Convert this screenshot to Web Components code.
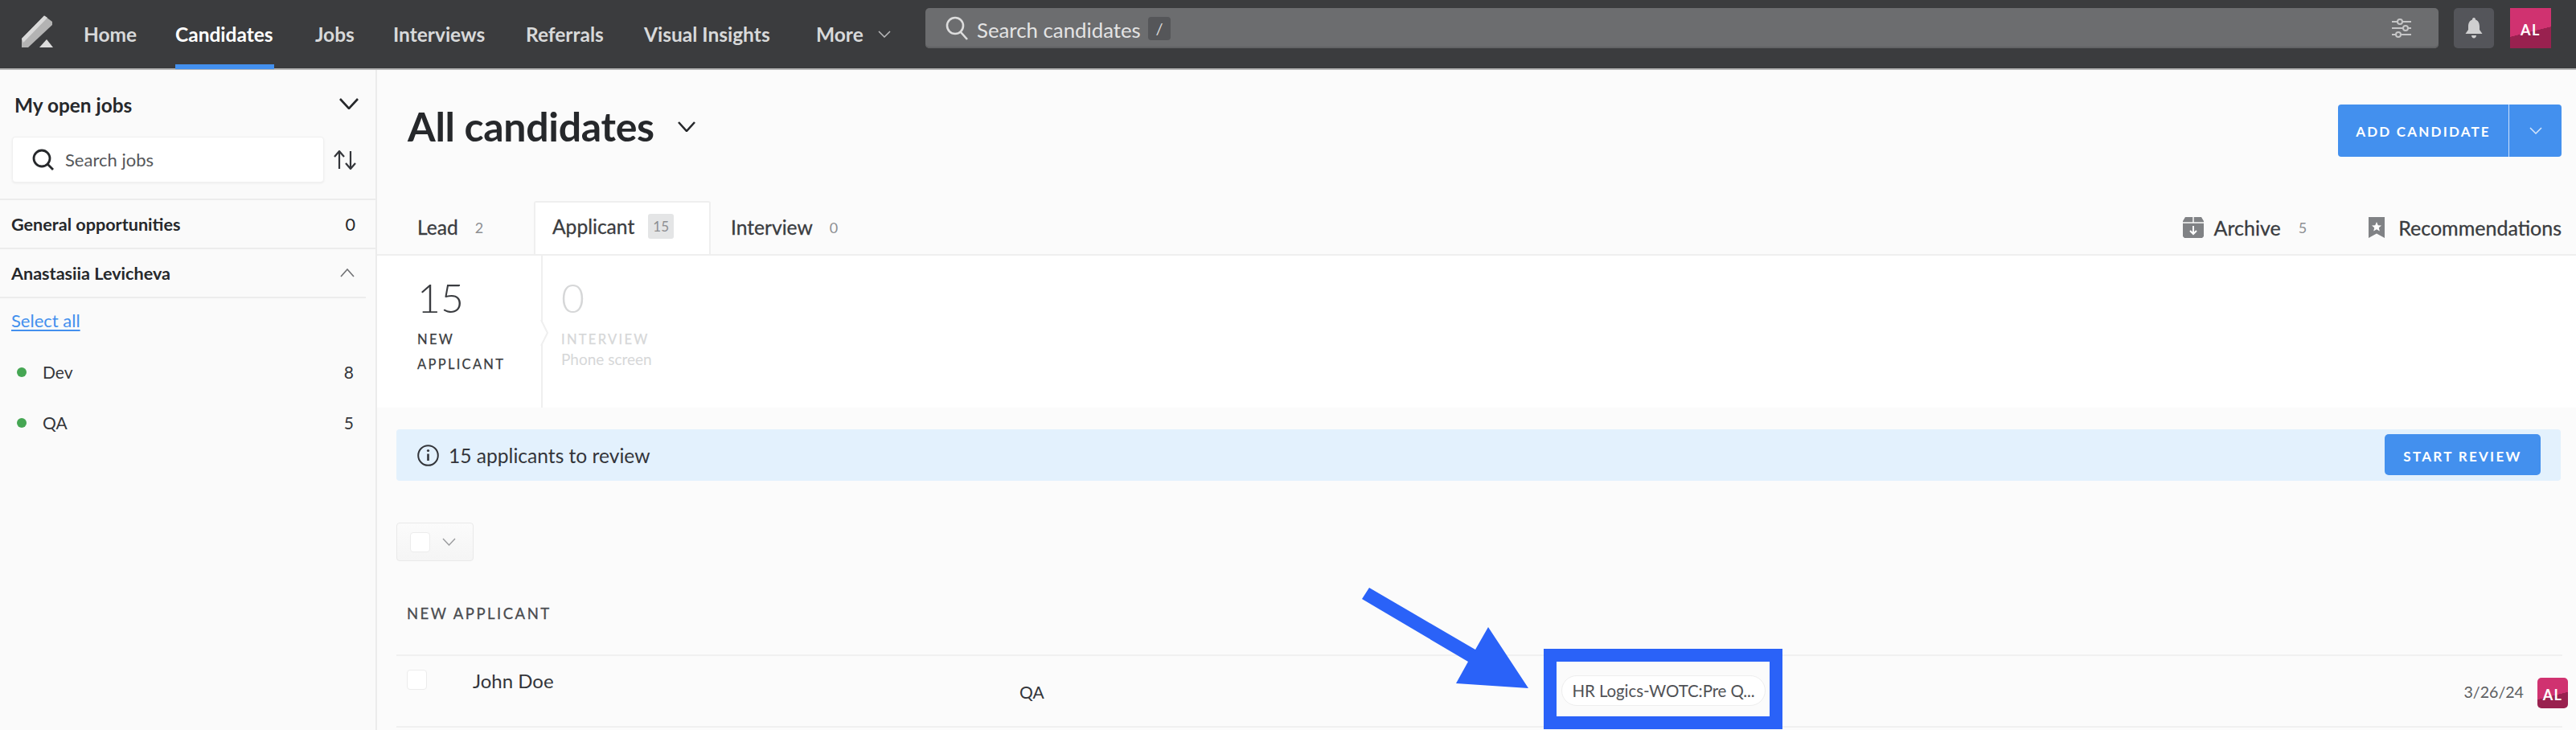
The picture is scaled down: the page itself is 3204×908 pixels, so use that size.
<!DOCTYPE html>
<html><head><meta charset="utf-8">
<style>
html,body{margin:0;height:908px;overflow:hidden;background:#fafafa;font-family:Lato,"Liberation Sans",sans-serif;color:#26282b}
</style></head><body>
<app-shell></app-shell>
<script>
const chev=(w,h,c,sw=2,up=false)=>`<svg width="${w}" height="${h}" viewBox="0 0 ${w} ${h}" fill="none" stroke="${c}" stroke-width="${sw}" style="display:block"><path d="${up?`M1 ${h-1}L${w/2} 1L${w-1} ${h-1}`:`M1 1L${w/2} ${h-1}L${w-1} 1`}"/></svg>`;
const avatar=`linear-gradient(166deg,#d03270 0 57%,#99214f 57.5% 100%)`;
function def(name,html){customElements.define(name,class extends HTMLElement{constructor(){super();this.attachShadow({mode:'open'}).innerHTML=html;}});}

def('nav-item',`<style>:host{display:flex;align-items:center;height:86px;box-sizing:border-box;font-size:24.5px;font-weight:700;color:#d8d9da;letter-spacing:0;border-bottom:6px solid transparent;padding-top:6px;white-space:nowrap}
:host([active]){color:#fff;border-bottom-color:#4390ee}</style><slot></slot>`);

def('top-nav',`<style>:host{display:flex;align-items:center;height:85px;background:#3b3c3e;border-bottom:2px solid #b5b5b5;position:relative}
.logo{margin:0 0 0 26px;width:78px;height:86px;flex:none}
nav{display:flex;gap:51px;width:1047px;flex:none}
.search{width:1882px;height:50px;flex:none;margin:-15px 0 0 0;background:#6c6d6f;border-radius:5px;box-shadow:inset 0 -2px 0 #626365;display:flex;align-items:center;box-sizing:border-box;padding:0 33px 0 25px;color:#e4e4e4;font-size:25.8px}
.search span{margin-left:11px;width:201px;white-space:nowrap;padding-top:3px}
.search kbd{font:inherit;font-size:20px;margin-left:12px;width:28px;height:29px;background:#555659;border-radius:4px;display:flex;align-items:center;justify-content:center;color:#ddd}
.search svg:last-child{margin-left:auto}
.bell{width:50px;height:50px;margin:-15px 0 0 19px;background:#54555a;border-radius:5px;display:flex;align-items:center;justify-content:center;flex:none}
.me{width:51px;height:50px;margin:-15px 0 0 20px;background:${avatar};color:#fff;font-size:18px;font-weight:700;letter-spacing:1.5px;display:flex;align-items:center;justify-content:center;flex:none;padding-top:4px;box-sizing:border-box}
</style>
<div class="logo"><svg width="44" height="44" viewBox="0 0 44 44" style="display:block;margin-top:18px"><path d="M1 30L29 1.5L39 9L39 13L9 41H1Z" fill="#b3b3b3"/><path d="M1 30L29 1.5L33 4L3 35Z" fill="#d9d9d9"/><path d="M23 41L32 31L40 41Z" fill="#dcdcdc"/></svg></div>
<nav><nav-item style="width:63px">Home</nav-item><nav-item active style="width:123px">Candidates</nav-item><nav-item style="width:46px">Jobs</nav-item><nav-item style="width:114px">Interviews</nav-item><nav-item style="width:96px">Referrals</nav-item><nav-item style="width:163px">Visual Insights</nav-item><nav-item>More<span style="display:inline-block;width:18px;margin-left:18px">${chev(16,9,'#b9babb',1.5)}</span></nav-item></nav>
<div class="search"><svg width="28" height="30" viewBox="0 0 28 30" fill="none" stroke="#ddd" stroke-width="2.6"><circle cx="12" cy="12" r="10"/><path d="M19 20L27 29"/></svg><span>Search candidates</span><kbd>/</kbd>
<svg width="26" height="26" viewBox="0 0 26 26" fill="none" stroke="#c6c6c7" stroke-width="2"><path d="M1 5H8M14 5H25M1 13H15M21 13H25M1 21H6M12 21H25"/><circle cx="11" cy="5" r="3"/><circle cx="18" cy="13" r="3"/><circle cx="9" cy="21" r="3"/></svg></div>
<div class="bell"><svg width="22" height="26" viewBox="0 0 22 26" fill="#cfcfd0"><path d="M11 0C12.5 0 13 1 13 2.5C16.5 3.5 18 7 18 11V15L21.5 20H.5L4 15V11C4 7 5.5 3.5 9 2.5C9 1 9.500 0 11 0Z"/><path d="M8 22H14C14 24 12.500 25.500 11 25.500S8 24 8 22Z"/></svg></div>
<div class="me">AL</div>`);

def('side-row',`<style>:host{display:flex;align-items:center;justify-content:space-between;box-sizing:border-box;padding:0 26px 0 14px;font-size:21.6px;font-weight:700;color:#26282b;border-bottom:2px solid #ececec;white-space:nowrap}
::slotted(*){flex:none}</style><slot></slot>`);

def('job-row',`<style>:host{display:flex;align-items:center;height:63px;padding:0 27px 0 21px;font-size:21px;color:#34363a}
i{width:12px;height:12px;border-radius:50%;background:#45a653;margin-right:20px}b{font-weight:400;margin-left:auto}</style><i></i><slot></slot><b><slot name="n"></slot></b>`);

def('side-bar',`<style>:host{display:block;width:469px;flex:none;box-sizing:border-box;border-right:2px solid #ececec;height:821px;background:#fafafa}
.h{display:flex;align-items:center;justify-content:space-between;height:83px;padding:0 21px 0 18px;font-size:24.4px;font-weight:700}
.h span{padding-top:3px}
.s{display:flex;align-items:center;height:57px;padding-left:15px;margin-bottom:20px}
.box{width:388px;height:57px;box-sizing:border-box;background:#fff;border:1px solid #f0f0f0;border-radius:4px;box-shadow:0 1px 3px #0000000f;display:flex;align-items:center;padding-left:24px;font-size:22px;color:#55575a;gap:14px}
.s svg.sort{margin-left:12px}
.top{border-bottom:2px solid #ececec;height:160px}
.anas{height:61px}
a{display:block;margin:14px 0 0 14px;height:46px;color:#4390ee;font-size:22px;text-decoration:underline;text-underline-offset:3px}
</style>
<div class="top"><div class="h"><span>My open jobs</span>${chev(24,14,'#26282b',2.6)}</div>
<div class="s"><div class="box"><svg width="27" height="27" viewBox="0 0 27 27" fill="none" stroke="#26282b" stroke-width="2.8"><circle cx="12" cy="12" r="10"/><path d="M19 19L26 26"/></svg><span>Search jobs</span></div>
<svg class="sort" width="28" height="24" viewBox="0 0 28 24" fill="none" stroke="#33353a" stroke-width="2.2"><path d="M7 23V2M1 8L7 1L13 8M21 1V22M15 16L21 23L27 16"/></svg></div></div>
<side-row style="height:61px"><span>General opportunities</span><span style="margin-right:-1px;font-weight:400">0</span></side-row>
<div class="anas"><side-row style="height:61px;margin-right:12px;padding-right:14px"><span>Anastasiia Levicheva</span>${chev(18,11,'#707174',1.6,true)}</side-row></div>
<a>Select all</a>
<job-row>Dev<span slot="n">8</span></job-row><job-row>QA<span slot="n">5</span></job-row>`);

def('tab-item',`<style>:host{display:flex;align-items:center;height:68px;box-sizing:border-box;padding-bottom:3px;font-size:24.6px;color:#3a3c40;font-weight:400;-webkit-text-stroke:.3px #3a3c40;white-space:nowrap}
:host([sel]){background:#fff;border:2px solid #efefef;border-bottom:none;border-radius:3px 3px 0 0;position:relative;top:2px;margin-top:-2px;padding:0 0 7px 21px}
b{font-weight:400;-webkit-text-stroke:0;font-size:18px;color:#8d8f92;margin-left:21px}
:host([sel]) b{margin-left:17px;background:#e4e5e6;border-radius:3px;width:32px;height:31px;display:flex;align-items:center;justify-content:center;font-size:17px}
</style><slot></slot><b><slot name="n"></slot></b>`);

def('main-head',`<style>:host{display:flex;justify-content:space-between;height:163px;box-sizing:border-box;padding:43px 18px 0 38px}
h1{margin:0;font-size:50px;font-weight:700;line-height:54px;letter-spacing:-.3px;color:#26282b;display:flex;align-items:center;height:54px;gap:29px}
.btn{display:flex;width:278px;height:65px;background:#4390ee;border-radius:4px;color:#fff;font-size:17px;font-weight:700;letter-spacing:2.2px;align-items:stretch}
.btn span{width:213px;text-align:center;border-right:1px solid #cfe2fa;line-height:68px;box-sizing:border-box;white-space:nowrap}
.btn i{margin:28px 0 0 25px}</style>
<h1>All candidates ${chev(22,13,'#26282b',2.6)}</h1>
<div class="btn"><span>ADD CANDIDATE</span><i>${chev(16,9,'#d6e6fb',1.5)}</i></div>`);

def('tab-bar',`<style>:host{display:flex;height:68px;padding:0 18px 0 50px;border-bottom:0;position:relative}
.r{display:flex;margin-left:auto;align-items:center;padding-bottom:3px;font-size:25px;color:#3a3c40;-webkit-text-stroke:.3px #3a3c40;white-space:nowrap}
.r b{font-weight:400;font-size:18px;color:#8d8f92;-webkit-text-stroke:0;margin:0 77px 0 22px}
.r svg{margin-right:13px}</style>
<tab-item style="width:145px">Lead<span slot="n">2</span></tab-item>
<tab-item sel style="width:220px">Applicant<span slot="n">15</span></tab-item>
<tab-item style="margin-left:25px">Interview<span slot="n">0</span></tab-item>
<div class="r"><svg width="26" height="26" viewBox="0 0 26 26"><path d="M3 0H23L26 5V24L24 26H2L0 24V5Z" fill="#808285"/><path d="M0 7H26" stroke="#fafafa" stroke-width="1.5"/><path d="M13 11V21M9 17L13 21L17 17" stroke="#fff" stroke-width="2" fill="none"/><path d="M13 0V7" stroke="#fafafa" stroke-width="1.500"/></svg>Archive<b>5</b>
<svg width="20" height="26" viewBox="0 0 20 26" style="margin-right:17px"><path d="M0 0H20V26L10 20.500L0 26Z" fill="#808285"/><path d="M10 6L11.800 10.200L16 10.500L12.800 13.300L13.800 17.500L10 15.300L6.200 17.500L7.200 13.300L4 10.500L8.200 10.200Z" fill="#fff"/></svg>Recommendations</div>`);

def('stage-cell',`<style>:host{display:block;box-sizing:border-box;height:189px;background:#fff}
.n{font-size:50px;font-weight:300;line-height:50px;padding-top:27px;height:50px}
.l{font-size:16.5px;font-weight:400;letter-spacing:2.3px;line-height:31px;margin-top:12px;-webkit-text-stroke:.25px currentColor}
.s{font-size:19px;line-height:24px;margin-top:-3px}
</style><div class="n"><slot name="n"></slot></div><div class="l"><slot name="l"></slot></div><div class="s"><slot name="s"></slot></div>`);

def('stage-row',`<style>:host{display:flex;height:191px;box-sizing:border-box;background:#fff;border-bottom:2px solid #ececec;border-top:2px solid #efefef;margin-top:-2px;position:relative}
stage-cell{width:204px;padding-left:50px;color:#3a3c40}
stage-cell+stage-cell{flex:1;padding-left:23px;border-left:2px solid #efefef;color:#d6d7d8}
svg{position:absolute;left:203px;top:78px}</style>
<stage-cell><span slot="n">15</span><span slot="l">NEW<br>APPLICANT</span></stage-cell>
<stage-cell><span slot="n">0</span><span slot="l">INTERVIEW</span><span slot="s">Phone screen</span></stage-cell>
<svg width="12" height="36" viewBox="0 0 12 36"><path d="M1 2L9 18L1 34" fill="#fff" stroke="#efefef" stroke-width="2"/></svg>`);

def('review-banner',`<style>:host{display:flex;align-items:center;height:64px;margin:27px 19px 0 24px;background:#e3f1fd;border-radius:4px;padding:0 25px 0 26px;font-size:24.6px;color:#33353a}
svg{margin-right:12px}
.b{margin-left:auto;width:194px;height:51px;box-sizing:border-box;padding-top:3px;background:#4390ee;border-radius:5px;color:#fff;font-size:17px;font-weight:700;letter-spacing:2.3px;display:flex;align-items:center;justify-content:center;margin-top:-1px}
</style><svg width="27" height="27" viewBox="0 0 27 27" fill="none" stroke="#33353a" stroke-width="2"><circle cx="13.500" cy="13.500" r="12.300"/><path d="M13.500 11.500V20" stroke-width="2.600"/><circle cx="13.500" cy="7.500" r="1.600" fill="#33353a" stroke="none"/></svg><slot></slot><div class="b">START REVIEW</div>`);

def('check-box',`<style>:host{display:block;width:25px;height:25px;box-sizing:border-box;background:#fff;border:1px solid #ececec;border-radius:4px;flex:none}</style>`);

def('cand-row',`<style>:host{display:flex;height:91px;box-sizing:border-box;margin:0 17px 0 24px;border-top:2px solid #f0f0f0;border-bottom:2px solid #f0f0f0;padding:17px 0 0 13px;position:relative;font-size:24px;color:#33353a}
.name{margin-left:57px;line-height:28px;width:680px}
.job{font-size:21px;margin-top:13px;line-height:30px;width:674px}
.pill{width:254px;height:38px;box-sizing:border-box;border:1px solid #eee;border-radius:19px;background:#fff;font-size:20.5px;color:#505256;display:flex;align-items:center;justify-content:center;white-space:nowrap;margin-top:7px;letter-spacing:-.1px}
.date{margin-left:auto;font-size:19.6px;color:#5c5e62;line-height:30px;margin-top:13px}
.av{width:38px;height:38px;border-radius:5px;background:${avatar};color:#fff;font-size:18px;font-weight:700;letter-spacing:1.2px;display:flex;align-items:center;justify-content:center;padding-top:4px;box-sizing:border-box;margin:10px -7px 0 17px}
</style><check-box></check-box><div class="name">John Doe</div><div class="job">QA</div><div class="pill">HR Logics-WOTC:Pre Q...</div><div class="date">3/26/24</div><div class="av">AL</div>`);

def('cand-area',`<style>:host{display:block}
.bulk{width:96px;height:48px;box-sizing:border-box;margin:52px 0 0 24px;border:1px solid #e9e9e9;border-radius:4px;background:linear-gradient(#fbfbfb,#f5f5f5);display:flex;align-items:center;padding-left:16px;gap:15px}
h3{margin:52px 0 0 37px;height:64px;font-size:18.5px;letter-spacing:2.5px;color:#4a4c50;line-height:26px;font-weight:400;-webkit-text-stroke:.3px #4a4c50}
</style><div class="bulk"><check-box></check-box>${chev(17,10,'#9a9b9d',1.4)}</div><h3>NEW APPLICANT</h3><cand-row></cand-row>`);

def('main-pane',`<style>:host{display:block;flex:1;min-width:0;background:#fbfbfb}</style><main-head></main-head><tab-bar></tab-bar><stage-row></stage-row><review-banner>15 applicants to review</review-banner><cand-area></cand-area>`);

def('call-out',`<style>:host{position:absolute;left:1690px;top:725px;width:530px;height:183px}
.f{position:absolute;left:230px;top:82px;width:297px;height:100px;box-sizing:border-box;border:solid #2a62f8;border-width:16px}
svg{position:absolute;left:0;top:0}</style><svg width="215" height="135" viewBox="0 0 215 135"><path d="M13 6L4 20L136 98L121 125L211 131L161 55L145 83Z" fill="#2a62f8"/></svg><div class="f"></div>`);

def('app-shell',`<style>:host{display:block;position:relative;height:908px;overflow:hidden}.b{display:flex}</style><top-nav></top-nav><div class="b"><side-bar></side-bar><main-pane></main-pane></div><call-out></call-out>`);
</script></body></html>
